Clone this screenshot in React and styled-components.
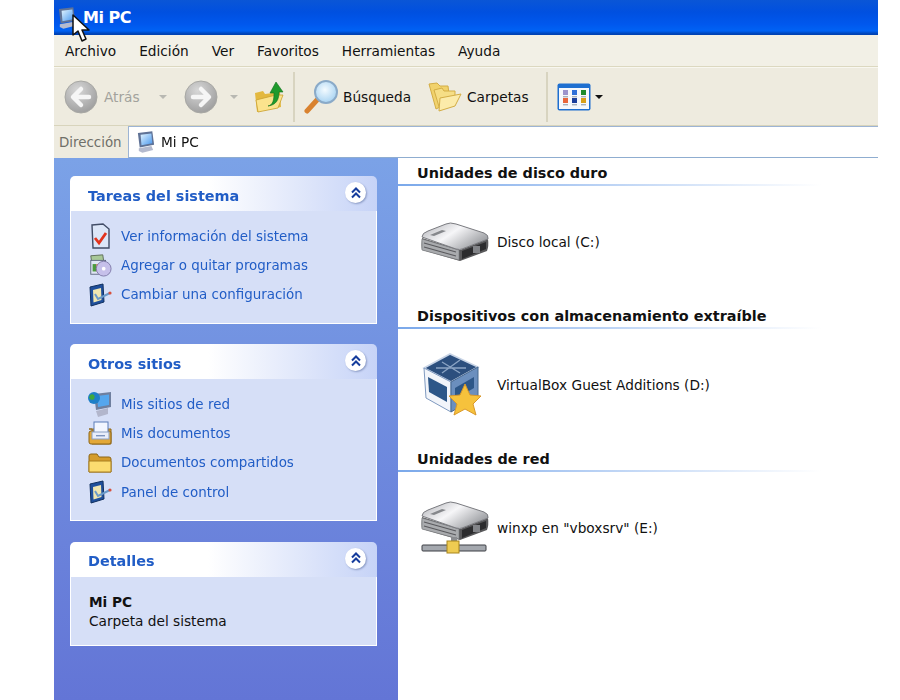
import React from 'react'
import styled, { createGlobalStyle } from 'styled-components'

const FONT = `"DejaVu Sans", Verdana, sans-serif`

const GlobalStyle = createGlobalStyle`
  html, body {
    margin: 0;
    padding: 0;
    background: #ffffff;
    font-family: ${FONT};
    overflow: hidden;
  }
`

/* ---------- icons ---------- */

const Computer = ({ width = 18, height = 22 }) => (
  <svg width={width} height={height} viewBox="0 0 20 24">
    <defs>
      <linearGradient id="pcScreen" x1="0" y1="0" x2="1" y2="1">
        <stop offset="0" stopColor="#e2f4ff" />
        <stop offset="1" stopColor="#4a98ee" />
      </linearGradient>
    </defs>
    <path d="M1 2 L17 0 L19 15 L3 18 Z" fill="#5f7296" />
    <path d="M4 4 L16 2.5 L17 13.5 L5 15.5 Z" fill="url(#pcScreen)" />
    <path d="M2 19 L16 16.5 L18 21 L6 24 L2 22 Z" fill="#b4bace" />
  </svg>
)

const Cursor = () => (
  <svg width="20" height="30" viewBox="0 0 20 30">
    <path
      d="M1 1 L1 21 L6 17 L10 27 L14 25 L10 16 L17 16 Z"
      fill="#ffffff"
      stroke="#111111"
      strokeWidth="1.5"
      strokeLinejoin="round"
    />
  </svg>
)

const NavCircle = ({ dir }) => (
  <svg width="34" height="34" viewBox="0 0 34 34">
    <defs>
      <radialGradient id="navDisc" cx="0.4" cy="0.3" r="0.8">
        <stop offset="0" stopColor="#d8d8d8" />
        <stop offset="1" stopColor="#989898" />
      </radialGradient>
    </defs>
    <circle cx="17" cy="17" r="16" fill="url(#navDisc)" stroke="#a8a8a4" />
    <path
      d={dir === 'left' ? 'M17 9 L9 17 L17 25 M10 17 H25' : 'M17 9 L25 17 L17 25 M24 17 H9'}
      fill="none"
      stroke="#f6f6f6"
      strokeWidth="4.5"
      strokeLinecap="round"
      strokeLinejoin="round"
    />
  </svg>
)

const FolderUp = () => (
  <svg width="30" height="34" viewBox="0 0 30 34">
    <path d="M1 13 L9 11 L11 14 L26 12 L27 27 L3 32 Z" fill="#e3b83f" />
    <path d="M2 20 L22 15 L29 15 L24 28 L4 32 Z" fill="#fbe38d" stroke="#c99f2e" strokeWidth="0.8" />
    <path
      d="M14 26 C19 25 20 20 20 13 L16 13 L22 2 L29 12 L25 12 C25 20 22 25 14 26 Z"
      fill="#1f9a2c"
      stroke="#11701d"
      strokeWidth="0.6"
    />
  </svg>
)

const Magnifier = () => (
  <svg width="36" height="36" viewBox="0 0 36 36">
    <defs>
      <radialGradient id="lens" cx="0.45" cy="0.4" r="0.7">
        <stop offset="0" stopColor="#f4fbff" />
        <stop offset="1" stopColor="#9ccdf0" />
      </radialGradient>
    </defs>
    <path d="M3 32 L13 21" stroke="#d9822f" strokeWidth="5" strokeLinecap="round" />
    <circle cx="22" cy="13" r="11" fill="url(#lens)" stroke="#8aaac8" strokeWidth="2" />
  </svg>
)

const Folders = () => (
  <svg width="34" height="30" viewBox="0 0 34 30">
    <path d="M1 2 L9 1 L12 4 L20 4 L22 20 L8 27 Z" fill="#f1d26c" stroke="#d3ad45" />
    <path d="M6 8 L14 6 L16 9 L27 9 L27 20 L12 28 Z" fill="#f6de86" stroke="#d3ad45" />
    <path d="M12 16 L33 12 L27 24 L11 29 Z" fill="#fcebaa" stroke="#d3ad45" />
  </svg>
)

const ViewsIcon = () => {
  const colors = ['#9c94cc', '#2f6fd8', '#1c8a2c', '#e8663c', '#1c3f9c', '#d8a018']
  return (
    <svg width="34" height="28" viewBox="0 0 34 28">
      <rect x="0.5" y="0.5" width="33" height="27" rx="2" fill="#1e6fd0" />
      <rect x="2" y="5" width="30" height="21" fill="#f6f8fc" />
      {colors.map((c, i) => (
        <g key={c}>
          <rect x={6 + (i % 3) * 9} y={i < 3 ? 7 : 15} width="5" height="5" fill={c} />
          <rect x={6 + (i % 3) * 9} y={i < 3 ? 13 : 21} width="5" height="1.4" fill="#a8b0bc" />
        </g>
      ))}
    </svg>
  )
}

const Chevrons = () => (
  <svg width="12" height="12" viewBox="0 0 12 12">
    <path
      d="M2 5.5 L6 1.5 L10 5.5 M2 10.5 L6 6.5 L10 10.5"
      fill="none"
      stroke="#153c9c"
      strokeWidth="2"
    />
  </svg>
)

const SysInfoIcon = () => (
  <svg width="20" height="26" viewBox="0 0 20 26">
    <path d="M2 2 L13 1 L19 6 L19 25 L3 25 Z" fill="#dce6f8" stroke="#414c66" strokeWidth="1.4" />
    <path d="M5 15 L9 20 L16 10" fill="none" stroke="#e2331d" strokeWidth="2.8" />
  </svg>
)

const AddRemoveIcon = () => (
  <svg width="26" height="26" viewBox="0 0 26 26">
    <path d="M3 3 L16 2 L17 9 L4 10 Z" fill="#a8c898" stroke="#5c6a58" />
    <rect x="3" y="8" width="16" height="15" fill="#dfe6f4" stroke="#5f6880" />
    <rect x="5" y="12" width="4" height="8" fill="#4d9a3e" />
    <rect x="9" y="12" width="3" height="8" fill="#e06a3a" />
    <circle cx="17" cy="17" r="8" fill="#c6c0ea" stroke="#7f7aa8" />
    <circle cx="17" cy="17" r="2" fill="#ffffff" />
  </svg>
)

const ControlIcon = () => (
  <svg width="24" height="24" viewBox="0 0 24 24">
    <path d="M2 4 L15 1 L16 19 L3 23 Z" fill="#1f4f9c" stroke="#10305f" />
    <path d="M5 7 L13 5 L13.5 17 L5.5 19.5 Z" fill="#f0e6b0" />
    <path d="M7 11 L10 16 L22 10" fill="none" stroke="#6a9ac8" strokeWidth="2" />
    <circle cx="22" cy="10" r="1.6" fill="#d8503c" />
  </svg>
)

const NetworkPlacesIcon = () => (
  <svg width="24" height="26" viewBox="0 0 24 26">
    <path d="M6 3 L23 1 L23 16 L8 19 Z" fill="#6f7f9f" />
    <path d="M9 5 L21 3.5 L21 14 L10 16 Z" fill="#55a6ee" />
    <path d="M8 20 L20 17 L20 23 L10 26 Z" fill="#b2b6cc" />
    <circle cx="6" cy="7" r="6" fill="#1d7fc8" />
    <path d="M2 4 C5 2 8 5 6 8 C4 10 2 8 1 7 Z" fill="#3ea83c" />
  </svg>
)

const MyDocumentsIcon = () => (
  <svg width="24" height="24" viewBox="0 0 24 24">
    <path d="M1 8 L4 8 L4 23 L23 23 L23 8 Z" fill="#e3a838" stroke="#8d6618" />
    <rect x="1" y="10" width="22" height="13" rx="2" fill="#e3a838" stroke="#8d6618" />
    <rect x="6" y="1" width="14" height="11" fill="#f2f6ff" stroke="#5b7cb8" />
    <rect x="4" y="11" width="17" height="7" fill="#e8eefb" stroke="#8aa0c4" />
    <rect x="8" y="14" width="9" height="1.4" fill="#7d94be" />
  </svg>
)

const SharedFolderIcon = () => (
  <svg width="24" height="20" viewBox="0 0 24 20">
    <path d="M1 3 Q1 1 3 1 L9 1 L11 4 L21 4 Q23 4 23 6 L23 19 L1 19 Z" fill="#d49c2c" stroke="#8d6618" />
    <path d="M1 8 L23 8 L23 19 L1 19 Z" fill="#fbdc70" stroke="#a87e20" />
  </svg>
)

const DriveBody = () => (
  <>
    <path d="M2 16 Q1 24 2 28 L40 39 L67 29 Q69 24 68 17 L40 28 Z" fill="#58585a" />
    <path d="M2 17 L39 28 L39 38 L2 28 Z" fill="#a9abae" stroke="#77787c" strokeWidth="0.6" />
    <path d="M4 21 L36 30 M4 25 L36 34" stroke="#5a5a5e" strokeWidth="1.2" />
    <path d="M2 15 Q2 11 8 9 L26 2 Q30 0 36 2 L64 11 Q69 13 68 17 L42 27 Q40 28 36 27 Z" fill="url(#driveTop)" stroke="#7a7b80" />
    <path d="M10 13 L22 8 L26 9 L14 14 Z" fill="#85878b" />
    <path d="M42 29 L66 20 L66 27 L42 37 Z" fill="#2c2c2e" />
    <rect x="53" y="24" width="7" height="7" fill="#828488" />
  </>
)

const DriveDefs = () => (
  <defs>
    <linearGradient id="driveTop" x1="0" y1="0" x2="1" y2="0.6">
      <stop offset="0" stopColor="#b0b1b6" />
      <stop offset="0.5" stopColor="#f6f6f8" />
      <stop offset="1" stopColor="#9c9ea2" />
    </linearGradient>
  </defs>
)

const DiskIcon = () => (
  <svg width="70" height="40" viewBox="0 0 70 40">
    <DriveDefs />
    <DriveBody />
  </svg>
)

const NetDriveIcon = () => (
  <svg width="70" height="54" viewBox="0 0 70 54">
    <DriveDefs />
    <DriveBody />
    <rect x="31" y="36" width="6" height="8" fill="#8a8c90" />
    <rect x="2" y="44" width="64" height="6" rx="1" fill="#a4a8ae" stroke="#3c3e44" />
    <rect x="27" y="40" width="12" height="12" fill="#eecb52" stroke="#a8851c" />
  </svg>
)

const VBoxIcon = () => (
  <svg width="70" height="66" viewBox="0 0 70 66">
    <path d="M4 16 L30 2 L58 15 L31 30 Z" fill="#2c4f7e" stroke="#c8d4e6" strokeWidth="1.6" />
    <path d="M22 10 L40 21 M40 8 L22 21 M16 16 H46" stroke="#8ba4c4" strokeWidth="1.4" />
    <path d="M4 16 L31 30 L31 60 L6 46 Z" fill="#f2f5fa" stroke="#7f9ac0" />
    <path d="M8 25 L27 35 L27 50 L9 40 Z" fill="#2d5788" />
    <path d="M31 30 L58 15 L58 44 L31 60 Z" fill="#6b8fbe" stroke="#47688f" />
    <path d="M35 36 L54 25 L54 36 L35 47 Z" fill="#2d5788" />
    <path
      d="M45 32 L50 43 L61 44 L53 52 L56 63 L45 57 L34 63 L37 52 L29 44 L40 43 Z"
      fill="#f6c23c"
      stroke="#d9982a"
      strokeLinejoin="round"
    />
  </svg>
)

/* ---------- data ---------- */

const menus = ['Archivo', 'Edición', 'Ver', 'Favoritos', 'Herramientas', 'Ayuda']

const tasks = [
  { icon: <SysInfoIcon />, label: 'Ver información del sistema' },
  { icon: <AddRemoveIcon />, label: 'Agregar o quitar programas' },
  { icon: <ControlIcon />, label: 'Cambiar una configuración' },
]

const places = [
  { icon: <NetworkPlacesIcon />, label: 'Mis sitios de red' },
  { icon: <MyDocumentsIcon />, label: 'Mis documentos' },
  { icon: <SharedFolderIcon />, label: 'Documentos compartidos' },
  { icon: <ControlIcon />, label: 'Panel de control' },
]

const sections = [
  { title: 'Unidades de disco duro', icon: <DiskIcon />, label: 'Disco local (C:)' },
  { title: 'Dispositivos con almacenamiento extraíble', icon: <VBoxIcon />, label: 'VirtualBox Guest Additions (D:)' },
  { title: 'Unidades de red', icon: <NetDriveIcon />, label: 'winxp en "vboxsrv" (E:)' },
]

const Panel = ({ title, children }) => (
  <PanelBox>
    <PanelHeader>
      <PanelTitle>{title}</PanelTitle>
      <Collapse><Chevrons /></Collapse>
    </PanelHeader>
    <PanelBody>{children}</PanelBody>
  </PanelBox>
)

const LinkList = ({ items }) => (
  <Links>
    {items.map((item) => (
      <LinkRow key={item.label}>
        <LinkIcon>{item.icon}</LinkIcon>
        <span>{item.label}</span>
      </LinkRow>
    ))}
  </Links>
)

export default function App() {
  return (
    <>
      <GlobalStyle />
      <Window>
        <TitleBar>
          <Computer />
          <WindowTitle>Mi PC</WindowTitle>
          <CursorSlot><Cursor /></CursorSlot>
        </TitleBar>

        <MenuBar>
          {menus.map((m) => (
            <MenuItem key={m}>{m}</MenuItem>
          ))}
        </MenuBar>

        <ToolBar>
          <ToolButton $width={120}>
            <NavCircle dir="left" />
            <GreyLabel>Atrás</GreyLabel>
            <Caret $grey />
          </ToolButton>
          <ToolButton $width={70}>
            <NavCircle dir="right" />
            <Caret $grey />
          </ToolButton>
          <ToolButton $width={39}>
            <FolderUp />
          </ToolButton>
          <Separator />
          <ToolButton $width={124} $gap={3}>
            <Magnifier />
            <span>Búsqueda</span>
          </ToolButton>
          <ToolButton $width={118} $gap={5}>
            <Folders />
            <span>Carpetas</span>
          </ToolButton>
          <Separator />
          <ToolButton $gap={4}>
            <ViewsIcon />
            <Caret />
          </ToolButton>
        </ToolBar>

        <AddressBar>
          <AddressLabel>Dirección</AddressLabel>
          <AddressField>
            <Computer />
            <span>Mi PC</span>
          </AddressField>
        </AddressBar>

        <Main>
          <Sidebar>
            <Panel title="Tareas del sistema">
              <LinkList items={tasks} />
            </Panel>
            <Panel title="Otros sitios">
              <LinkList items={places} />
            </Panel>
            <Panel title="Detalles">
              <Details>
                <strong>Mi PC</strong>
                <span>Carpeta del sistema</span>
              </Details>
            </Panel>
          </Sidebar>

          <Content>
            {sections.map((s) => (
              <Section key={s.title}>
                <SectionTitle>{s.title}</SectionTitle>
                <Item>
                  <ItemIcon>{s.icon}</ItemIcon>
                  <span>{s.label}</span>
                </Item>
              </Section>
            ))}
          </Content>
        </Main>
      </Window>
    </>
  )
}

/* ---------- styles ---------- */

const Window = styled.div`
  width: 824px;
  height: 700px;
  margin-left: 54px;
  display: flex;
  flex-direction: column;
  overflow: hidden;
  font-size: 13.7px;
  color: #111111;
  filter: blur(0.35px);
`

const TitleBar = styled.div`
  position: relative;
  flex: none;
  height: 35px;
  box-sizing: border-box;
  padding-left: 4px;
  display: flex;
  align-items: center;
  gap: 7px;
  background: linear-gradient(
    to bottom,
    #0a56d6 0%,
    #0050e0 35%,
    #0058ee 70%,
    #0062f4 88%,
    #0042b4 97%,
    #0042b4 100%
  );
`

const WindowTitle = styled.span`
  color: #ffffff;
  font-size: 16px;
  font-weight: 700;
  letter-spacing: -0.5px;
`

const CursorSlot = styled.div`
  position: absolute;
  left: 18px;
  top: 14px;
  z-index: 2;
  line-height: 0;
`

const MenuBar = styled.div`
  flex: none;
  height: 32px;
  box-sizing: border-box;
  padding-left: 11px;
  display: flex;
  align-items: center;
  gap: 23px;
  background: #f2f0e6;
  border-bottom: 1px solid #dcd8c0;
`

const MenuItem = styled.span`
  white-space: nowrap;
`

const ToolBar = styled.div`
  flex: none;
  height: 59px;
  box-sizing: border-box;
  padding-left: 10px;
  display: flex;
  align-items: center;
  background: #eeebdf;
  border-top: 1px solid #f8f7f0;
  border-bottom: 1px solid #d8d4bc;
`

const ToolButton = styled.div`
  box-sizing: border-box;
  width: ${(p) => (p.$width ? `${p.$width}px` : 'auto')};
  flex: none;
  display: flex;
  align-items: center;
  gap: ${(p) => (p.$gap ? p.$gap : 6)}px;
  white-space: nowrap;
`

const GreyLabel = styled.span`
  color: #a2a29c;
  margin-right: 7px;
`

const Caret = styled.span`
  width: 0;
  height: 0;
  margin-left: ${(p) => (p.$grey ? 6 : 0)}px;
  border-left: 4px solid transparent;
  border-right: 4px solid transparent;
  border-top: 4px solid ${(p) => (p.$grey ? '#b8b8b2' : '#111111')};
`

const Separator = styled.div`
  flex: none;
  width: 2px;
  height: 50px;
  margin-right: 9px;
  background: #d8d4c0;
`

const AddressBar = styled.div`
  flex: none;
  height: 32px;
  box-sizing: border-box;
  display: flex;
  background: #eeebdf;
`

const AddressLabel = styled.div`
  width: 74px;
  box-sizing: border-box;
  padding-left: 5px;
  display: flex;
  align-items: center;
  font-size: 13.4px;
  color: #6f6f68;
  white-space: nowrap;
`

const AddressField = styled.div`
  flex: 1;
  box-sizing: border-box;
  padding-left: 8px;
  display: flex;
  align-items: center;
  gap: 6px;
  background: #ffffff;
  border-top: 1px solid #9db4d4;
  border-left: 1px solid #9db4d4;
  border-bottom: 1px solid #8fadd0;
`

const Main = styled.div`
  flex: 1;
  display: flex;
  min-height: 0;
`

const Sidebar = styled.div`
  flex: none;
  width: 344px;
  box-sizing: border-box;
  padding: 18px 21px 0 16px;
  display: flex;
  flex-direction: column;
  gap: 20.6px;
  background: linear-gradient(to bottom, #7ba2e7, #6375d6);
`

const PanelBox = styled.section`
  display: flex;
  flex-direction: column;
`

const PanelHeader = styled.div`
  height: 35px;
  box-sizing: border-box;
  padding: 0 11px 0 18px;
  display: flex;
  align-items: center;
  justify-content: space-between;
  border-radius: 5px 5px 0 0;
  background: linear-gradient(to right, #ffffff 45%, #c6d3f7 100%);
`

const PanelTitle = styled.span`
  padding-top: 4px;
  color: #215dc6;
  font-size: 14.4px;
  font-weight: 700;
`

const Collapse = styled.span`
  width: 21px;
  height: 21px;
  margin-top: -2px;
  border-radius: 50%;
  display: flex;
  align-items: center;
  justify-content: center;
  background: #ffffff;
  box-shadow: 1px 1px 2px #8a9ac4;
`

const PanelBody = styled.div`
  box-sizing: border-box;
  padding: 12px 10px 15px 17px;
  background: #d6dff7;
  border: 1px solid #ffffff;
  border-top: none;
`

const Links = styled.div`
  display: flex;
  flex-direction: column;
  gap: 3.3px;
`

const LinkRow = styled.div`
  height: 26px;
  display: flex;
  align-items: center;
  gap: 9px;
  font-size: 13.45px;
  color: #215dc6;
  white-space: nowrap;
`

const LinkIcon = styled.span`
  flex: none;
  width: 24px;
  display: flex;
  align-items: center;
  justify-content: center;
  line-height: 0;
`

const Details = styled.div`
  margin: 5px 0 0 1px;
  display: flex;
  flex-direction: column;
  gap: 2px;
  line-height: 17px;
  color: #111111;
`

const Content = styled.div`
  flex: 1;
  background: #ffffff;
`

const Section = styled.section`
  height: 143px;
`

const SectionTitle = styled.h2`
  margin: 0;
  height: 28px;
  box-sizing: border-box;
  padding: 7px 0 0 19px;
  font-size: 14.4px;
  font-weight: 700;
  line-height: 17px;
  color: #111111;
  border-bottom: 2px solid transparent;
  border-image: linear-gradient(to right, #7aa8ea, #ffffff 88%) 1;
`

const Item = styled.div`
  height: 115px;
  box-sizing: border-box;
  padding: 0 0 4px 22px;
  display: flex;
  align-items: center;
  gap: 7px;
  white-space: nowrap;
`

const ItemIcon = styled.span`
  flex: none;
  width: 70px;
  display: flex;
  justify-content: center;
  line-height: 0;
`
